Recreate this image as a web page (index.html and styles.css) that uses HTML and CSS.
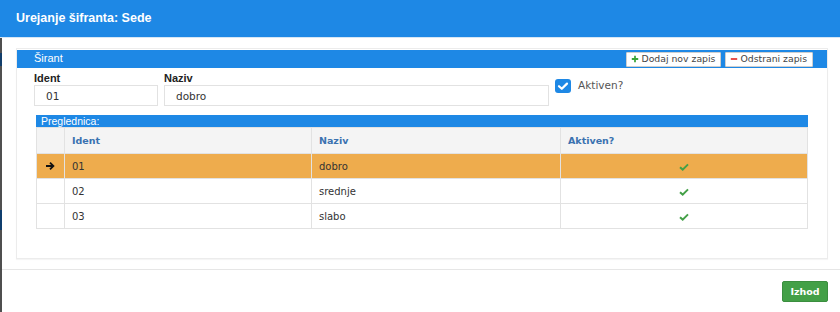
FILE: index.html
```html
<!DOCTYPE html>
<html lang="sl">
<head>
<meta charset="utf-8">
<title>Urejanje šifranta: Sede</title>
<link rel="stylesheet" href="styles.css">
</head>
<body>
<div class="dialog">
  <header class="dlg-head">
    <h1 class="dlg-title">Urejanje šifranta: Sede</h1>
  </header>
  <div class="dlg-main">
    <div class="edge"></div>
    <div class="dlg-content">
      <section class="panel">
        <div class="panel-head">
          <span class="panel-title">Širant</span>
          <div class="panel-tools">
            <button class="tool-btn" type="button"><svg class="ico" viewBox="0 0 10 10"><path d="M5 1v8M1 5h8" stroke="#3aa53a" stroke-width="2.2"/></svg>Dodaj nov zapis</button>
            <button class="tool-btn" type="button"><svg class="ico" viewBox="0 0 10 10"><path d="M1 5h8" stroke="#e53935" stroke-width="2.2"/></svg>Odstrani zapis</button>
          </div>
        </div>
        <div class="panel-body">
          <div class="form-row">
            <label class="field f-ident">
              <span class="lbl">Ident</span>
              <span class="inp">01</span>
            </label>
            <label class="field f-naziv">
              <span class="lbl">Naziv</span>
              <span class="inp">dobro</span>
            </label>
            <div class="chk-field">
              <svg class="chk" viewBox="0 0 16 14"><rect x="0" y="0" width="16" height="14" rx="3" fill="#1e88e5"/><path d="M4 7.2l2.8 2.6L12 4.6" fill="none" stroke="#fff" stroke-width="2.2" stroke-linecap="round" stroke-linejoin="round"/></svg>
              <span class="chk-lbl">Aktiven?</span>
            </div>
          </div>
          <div class="grid-wrap">
            <div class="grid-caption">Preglednica:</div>
            <table class="grid">
              <thead>
                <tr><th class="c-sel"></th><th class="c-id">Ident</th><th class="c-name">Naziv</th><th class="c-act">Aktiven?</th></tr>
              </thead>
              <tbody>
                <tr class="selected">
                  <td class="c-sel"><svg class="arrow" viewBox="0 0 10 10"><path d="M1 5h7M5 1.6L8.4 5 5 8.4" fill="none" stroke="#111" stroke-width="1.8"/></svg></td>
                  <td>01</td><td>dobro</td>
                  <td class="c-act"><svg class="ok" viewBox="0 0 10 8"><path d="M1 4.2l2.7 2.4L9 1.4" fill="none" stroke="#43a047" stroke-width="2"/></svg></td>
                </tr>
                <tr>
                  <td class="c-sel"></td>
                  <td>02</td><td>srednje</td>
                  <td class="c-act"><svg class="ok" viewBox="0 0 10 8"><path d="M1 4.2l2.7 2.4L9 1.4" fill="none" stroke="#43a047" stroke-width="2"/></svg></td>
                </tr>
                <tr>
                  <td class="c-sel"></td>
                  <td>03</td><td>slabo</td>
                  <td class="c-act"><svg class="ok" viewBox="0 0 10 8"><path d="M1 4.2l2.7 2.4L9 1.4" fill="none" stroke="#43a047" stroke-width="2"/></svg></td>
                </tr>
              </tbody>
            </table>
          </div>
        </div>
      </section>
      <footer class="dlg-foot">
        <button class="btn-exit" type="button">Izhod</button>
      </footer>
    </div>
  </div>
</div>
</body>
</html>
```

FILE: styles.css
```css
* { box-sizing: border-box; }
html, body { margin: 0; padding: 0; }
body {
  width: 840px;
  height: 312px;
  overflow: hidden;
  background: #fff;
  font-family: "DejaVu Sans", Verdana, sans-serif;
  color: #333;
}
.dialog { display: flex; flex-direction: column; height: 312px; }
.dlg-head {
  height: 38px;
  background: #1e88e5;
  border-bottom: 1px solid #d6e6f5;
  display: flex;
  align-items: center;
  padding-left: 16px;
}
.dlg-title {
  margin: 0;
  font-family: "Liberation Sans", Arial, sans-serif;
  font-weight: bold;
  font-size: 12.5px;
  color: #fff;
  position: relative;
  top: -1px;
}
.dlg-main { display: flex; flex: 1; }
.edge {
  width: 2px;
  background: linear-gradient(to bottom, #4f4f4f 0, #4f4f4f 15px, #123e6b 15px, #123e6b 28px, #505050 28px, #505050 172px, #0f3d6d 172px, #0f3d6d 192px, #4f4f4f 192px);
}
.dlg-content { flex: 1; padding: 10px 12px 0 14px; }
.panel {
  border: 1px solid #ececec;
  height: 211px;
  box-shadow: 0 1px 1px rgba(0,0,0,0.04);
}
.panel-head {
  height: 18px;
  background: #1e88e5;
  display: flex;
  align-items: center;
  justify-content: space-between;
  padding: 0 14px 0 17px;
  margin-top: 1px;
}
.panel-title {
  color: #fff;
  font-family: "Liberation Sans", Arial, sans-serif;
  font-size: 11px;
  position: relative;
  top: -1px;
}
.panel-tools { display: flex; gap: 4px; align-items: center; }
.tool-btn {
  height: 15px;
  background: #fff;
  border: 1px solid #cfcfcf;
  border-radius: 1px;
  padding: 0 5px 0 4px;
  font-family: "DejaVu Sans", Verdana, sans-serif;
  font-size: 9.3px;
  color: #444;
  display: flex;
  align-items: center;
  gap: 2px;
  line-height: 1;
}
.ico { width: 8px; height: 8px; }
.panel-body { padding: 3px 19px 0 17px; }
.form-row { display: flex; align-items: flex-start; }
.field { display: flex; flex-direction: column; }
.f-ident { width: 124px; margin-right: 6px; }
.f-naziv { width: 385px; margin-right: 6px; }
.lbl {
  font-family: "Liberation Sans", Arial, sans-serif;
  font-weight: bold;
  font-size: 11px;
  color: #222;
  height: 14px;
  line-height: 14px;
}
.inp {
  height: 21px;
  border: 1px solid #e2e2e2;
  font-size: 10.5px;
  color: #333;
  padding: 0 11px;
  display: flex;
  align-items: center;
}
.chk-field { display: flex; align-items: center; gap: 7px; margin-top: 8px; }
.chk { width: 16px; height: 14px; }
.chk-lbl { font-size: 10.5px; color: #555; position: relative; top: -1px; }
.grid-wrap { margin: 9px 0 0 2px; }
.grid-caption {
  height: 12px;
  line-height: 12px;
  background: #1e88e5;
  color: #fff;
  font-family: "Liberation Sans", Arial, sans-serif;
  font-size: 10.5px;
  padding-left: 5px;
}
.grid {
  width: 100%;
  border-collapse: collapse;
  border: 1px solid #e2e2e2;
  font-size: 10px;
}
.grid th, .grid td {
  border: 1px solid #e2e2e2;
  height: 25px;
  padding: 0 0 0 7px;
  text-align: left;
  vertical-align: middle;
}
.grid th {
  background: #f4f4f4;
  color: #3a72b0;
  font-weight: bold;
  height: 26px;
  font-size: 9.5px;
}
.grid td { color: #333; }
.grid .c-sel { width: 28px; padding: 0 0 0 8px; }
.grid .c-id { width: 247px; }
.grid .c-name { width: 249px; }
.grid td.c-act { text-align: center; padding: 0; }
.grid tr.selected td { background: #eeac4d; }
.arrow { width: 10px; height: 10px; display: block; }
.ok { width: 10px; height: 8px; display: inline-block; vertical-align: middle; }
.dlg-foot {
  margin-top: 10px;
  margin-left: -14px;
  margin-right: -12px;
  border-top: 1px solid #e6e6e6;
  padding: 11px 12px 0 0;
  display: flex;
  justify-content: flex-end;
}
.btn-exit {
  width: 46px;
  height: 21px;
  background: #43a047;
  border: 1px solid #3b8e3f;
  border-radius: 2px;
  color: #fff;
  font-family: "DejaVu Sans", Verdana, sans-serif;
  font-weight: bold;
  font-size: 9.5px;
  padding: 0;
}
```
